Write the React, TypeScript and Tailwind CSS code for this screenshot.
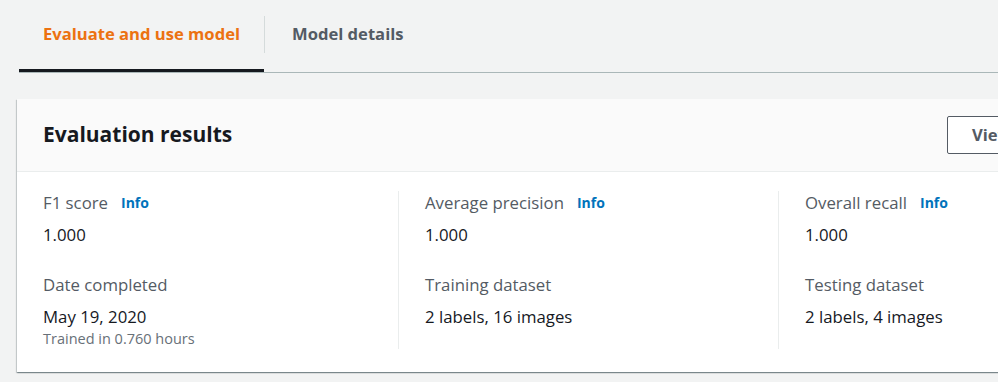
import React from "react";

const font = { fontFamily: '"Open Sans", "Noto Sans", Arial, sans-serif' };

function Field({ label, value, info, sub }: { label: string; value: string; info?: boolean; sub?: string }) {
  return (
    <div>
      <div className="flex items-center h-6 leading-6 text-[16.8px] text-[#545b64]">
        <span>{label}</span>
        {info && <span className="ml-[13px] text-[14px] font-bold text-[#0073bb]">Info</span>}
      </div>
      <div className="mt-[8px] leading-6 text-[16.8px] text-[#16191f]">{value}</div>
      {sub && <div className="leading-5 text-[14.5px] text-[#687078]">{sub}</div>}
    </div>
  );
}

function Column({ first, top, bottom }: { first?: boolean; top: React.ReactNode; bottom: React.ReactNode }) {
  return (
    <div className={first ? "w-[355px] shrink-0" : "w-[380px] shrink-0 border-l border-[#eaeded] pl-[26px]"}>
      {top}
      <div className="mt-[26px]">{bottom}</div>
    </div>
  );
}

export default function App() {
  return (
    <div className="w-[998px] h-[382px] overflow-hidden bg-[#f2f3f3]" style={font}>
      <div className="ml-[19px] flex h-[73px] border-b border-[#aab7b8]">
        <div className="flex flex-col w-[245px]">
          <div className="h-[69px] flex items-center pl-[24px] text-[16.6px] font-bold text-[#ec7211]">Evaluate and use model</div>
          <div className="h-[3px] bg-[#16191f]" />
        </div>
        <div className="w-px h-[37px] mt-[16px] bg-[#d5dbdb]" />
        <div className="h-[69px] flex items-center pl-[27px] text-[16.6px] font-bold text-[#545b64]">Model details</div>
      </div>
      <div className="ml-[17px] mt-[26px] w-[1200px] bg-white shadow-[0_1px_1px_0_rgba(0,28,36,0.3),1px_1px_1px_0_rgba(0,28,36,0.15),-1px_1px_1px_0_rgba(0,28,36,0.15)]">
        <div className="h-[73px] bg-[#fafafa] border-b border-[#eaeded] flex items-center pl-[26px]">
          <div className="w-[904px] text-[21px] font-bold text-[#16191f]">Evaluation results</div>
          <div className="h-[38px] flex items-center px-[24px] border border-[#545b64] rounded-[2px] bg-white text-[16.6px] font-bold text-[#545b64] whitespace-nowrap">View test results</div>
        </div>
        <div className="flex pl-[26px] pt-[19px] pb-[23px]">
          <Column
            first
            top={<Field label="F1 score" value="1.000" info />}
            bottom={<Field label="Date completed" value="May 19, 2020" sub="Trained in 0.760 hours" />}
          />
          <Column
            top={<Field label="Average precision" value="1.000" info />}
            bottom={<Field label="Training dataset" value="2 labels, 16 images" />}
          />
          <Column
            top={<Field label="Overall recall" value="1.000" info />}
            bottom={<Field label="Testing dataset" value="2 labels, 4 images" />}
          />
        </div>
      </div>
    </div>
  );
}
